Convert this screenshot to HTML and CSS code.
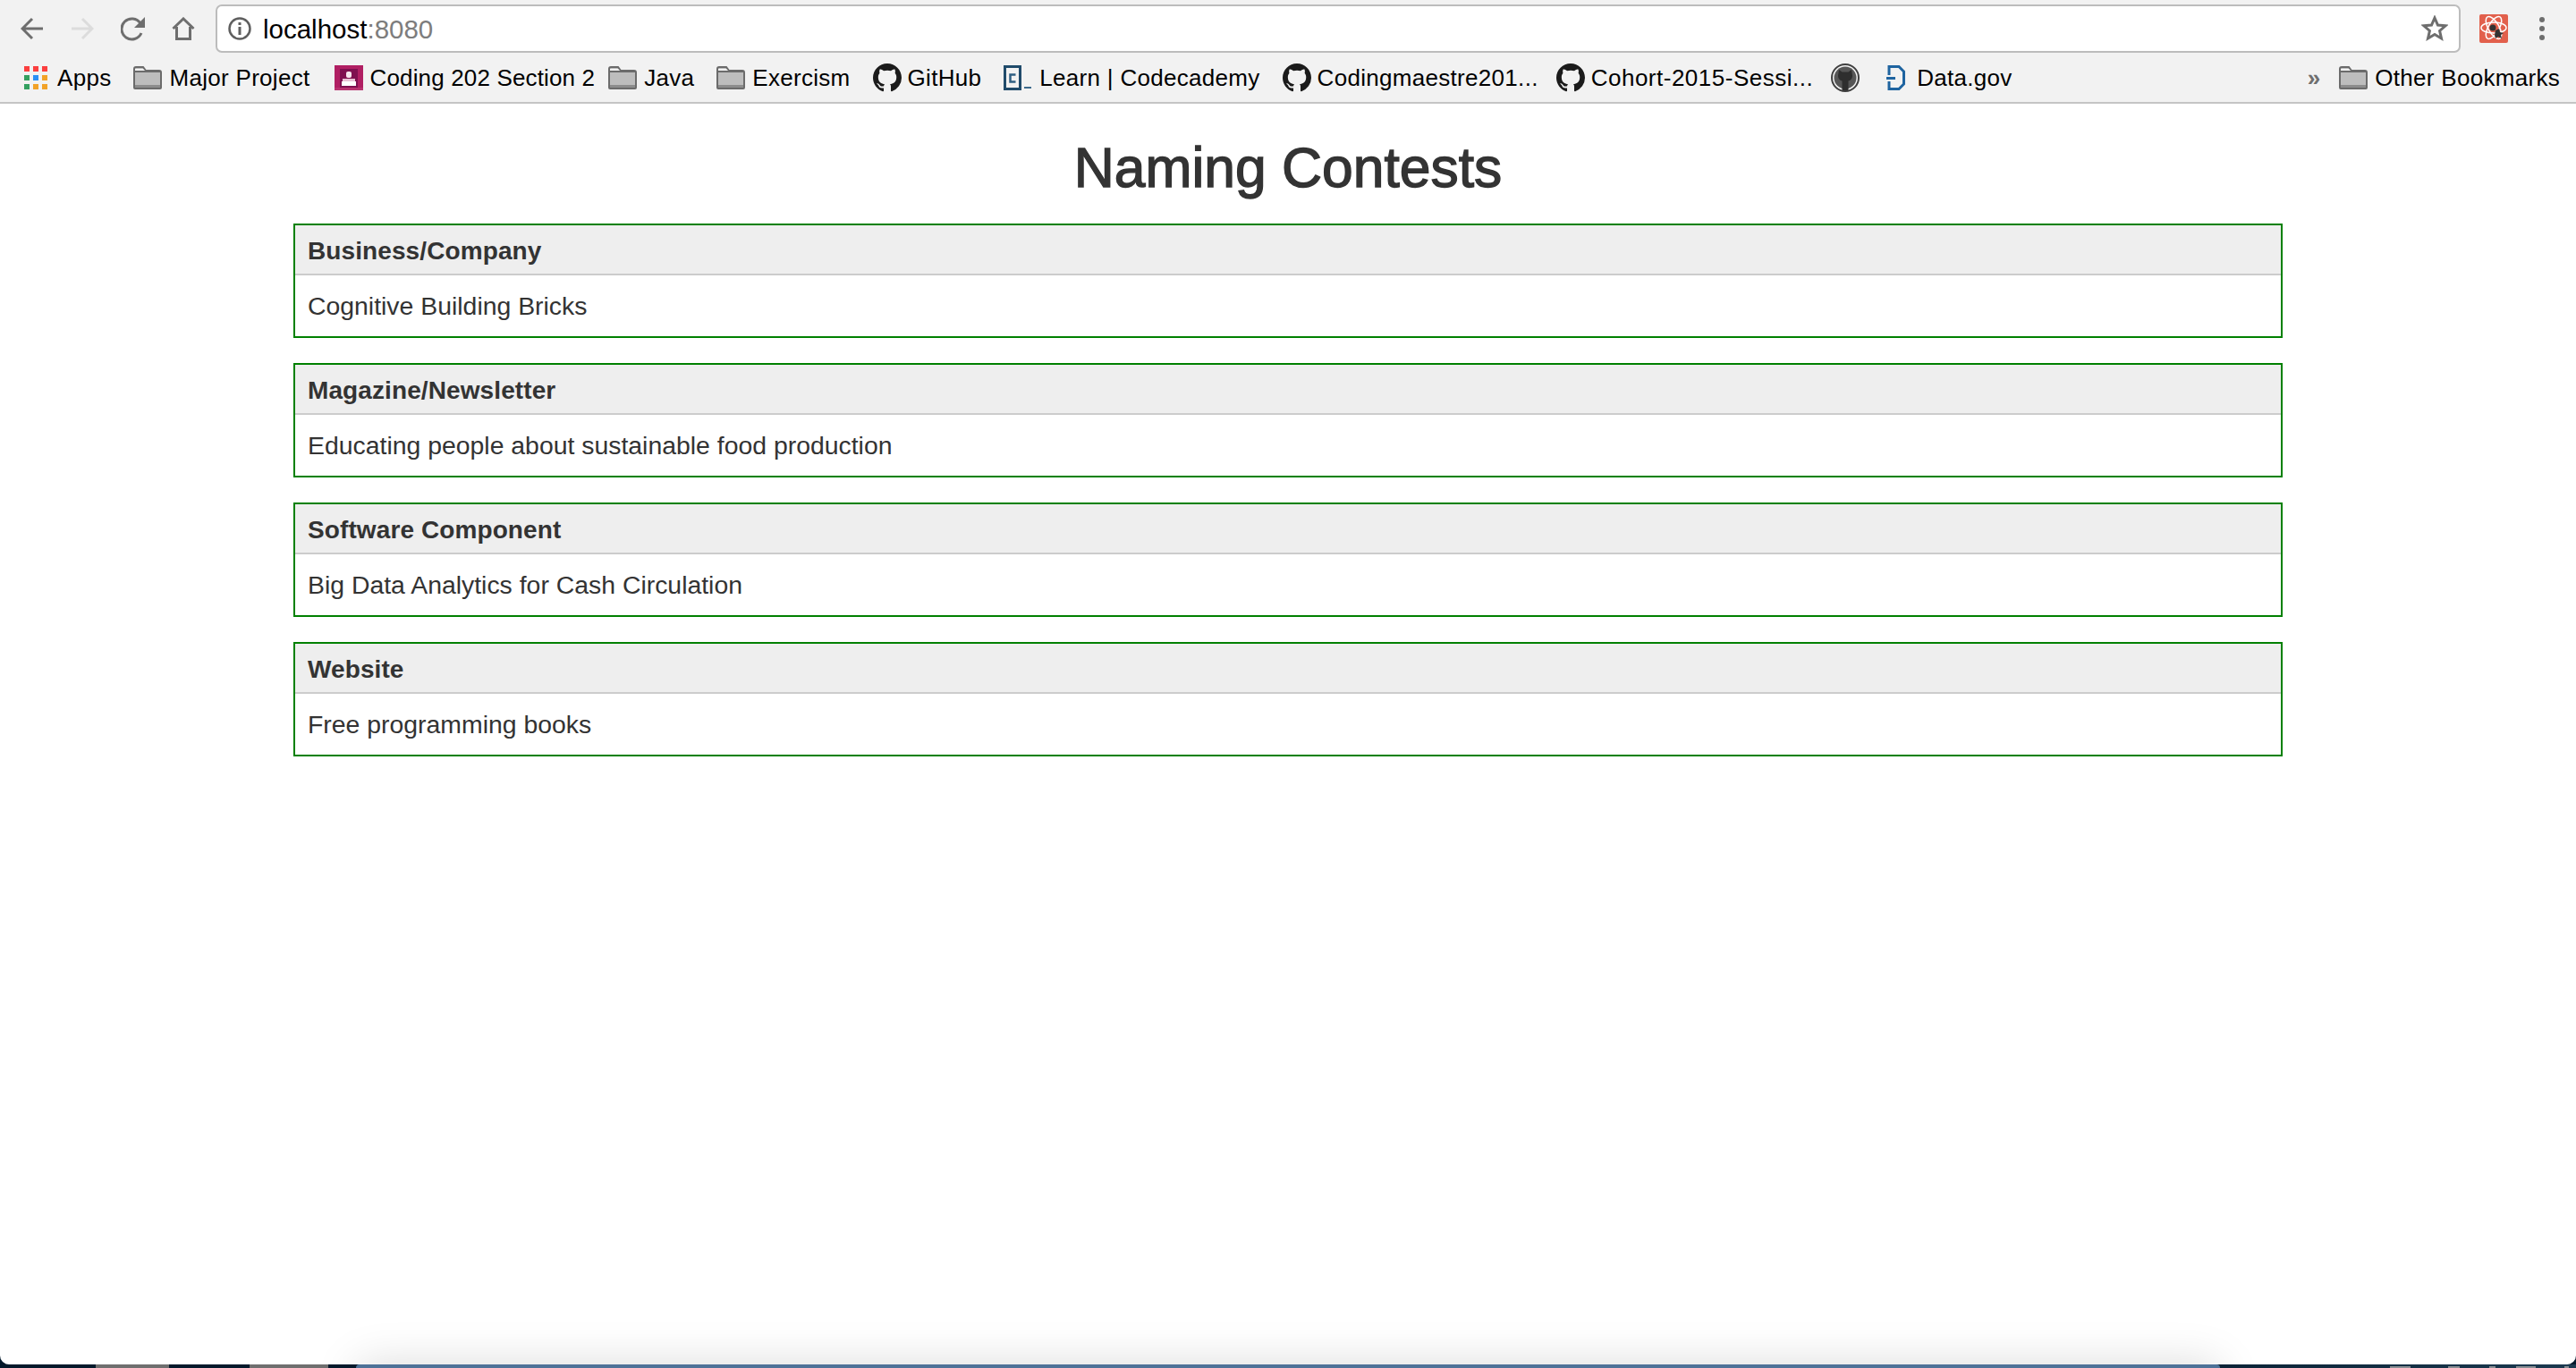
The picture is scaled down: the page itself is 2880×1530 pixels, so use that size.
FILE: index.html
```html
<!DOCTYPE html>
<html lang="en">
<head>
<meta charset="utf-8">
<title>Naming Contests</title>
<link rel="stylesheet" href="styles.css">
</head>
<body>
<svg class="defs" width="0" height="0" aria-hidden="true">
  <symbol id="folder" viewBox="0 0 32 26">
    <path d="M1 24V3a2 2 0 0 1 2-2h8l3 4h15a2 2 0 0 1 2 2v17a1 1 0 0 1-1 1H2a1 1 0 0 1-1-1z" fill="#bdbdbd" stroke="#6b6b6b" stroke-width="2"/>
    <path d="M2 6h12M2 6V3h9l3 3" fill="#f2f2f2" stroke="none"/>
    <path d="M2 6h28" stroke="#6b6b6b" stroke-width="2" fill="none"/>
    <rect x="2" y="21" width="28" height="3" fill="#8c8c8c"/>
  </symbol>
  <symbol id="octo" viewBox="0 0 16 16">
    <path fill="#1b1b1b" d="M8 0C3.58 0 0 3.58 0 8c0 3.54 2.29 6.53 5.47 7.59.4.07.55-.17.55-.38 0-.19-.01-.82-.01-1.49-2.01.37-2.53-.49-2.69-.94-.09-.23-.48-.94-.82-1.13-.28-.15-.68-.52-.01-.53.63-.01 1.08.58 1.23.82.72 1.21 1.87.87 2.33.66.07-.52.28-.87.51-1.07-1.78-.2-3.64-.89-3.64-3.95 0-.87.31-1.59.82-2.15-.08-.2-.36-1.02.08-2.12 0 0 .67-.21 2.2.82.64-.18 1.32-.27 2-.27.68 0 1.36.09 2 .27 1.53-1.04 2.2-.82 2.2-.82.44 1.1.16 1.92.08 2.12.51.56.82 1.27.82 2.15 0 3.07-1.87 3.75-3.65 3.95.29.25.54.73.54 1.48 0 1.07-.01 1.93-.01 2.2 0 .21.15.46.55.38A8.013 8.013 0 0 0 16 8c0-4.42-3.58-8-8-8z"/>
  </symbol>
</svg>

<header class="chrome">
  <div class="toolbar">
    <div class="nav">
      <svg class="navicon" width="26" height="26" viewBox="0 0 26 26"><path d="M25 13H3M13 2 2 13l11 11" fill="none" stroke="#6e6e6e" stroke-width="3"/></svg>
      <svg class="navicon" width="26" height="26" viewBox="0 0 26 26"><path d="M1 13h22M13 2l11 11-11 11" fill="none" stroke="#dcdcdc" stroke-width="3"/></svg>
      <svg class="navicon" width="28" height="28" viewBox="0 0 28 28"><path d="M23 19a11.500 11.500 0 1 1-1-11" fill="none" stroke="#6e6e6e" stroke-width="3"/><path d="M27 1v12H15z" fill="#6e6e6e"/></svg>
      <svg class="navicon" width="26" height="26" viewBox="0 0 26 26"><path d="M1.500 13 13 2l11.500 11M5.500 11v13.500h15V11" fill="none" stroke="#6e6e6e" stroke-width="3"/></svg>
    </div>
    <div class="omnibox">
      <svg class="info" width="28" height="28" viewBox="0 0 28 28"><circle cx="14" cy="14" r="11.500" fill="none" stroke="#5f5f5f" stroke-width="2.500"/><rect x="12.500" y="12" width="3" height="9" fill="#5f5f5f"/><rect x="12.500" y="7" width="3" height="3" fill="#5f5f5f"/></svg>
      <span class="url">localhost<span class="port">:8080</span></span>
      <svg class="star" width="30" height="30" viewBox="0 0 30 30"><path d="m15 3 3.500 8 8.500.8-6.400 5.700 1.900 8.500-7.500-4.500L7.500 26l1.900-8.500L3 11.800l8.500-.8z" fill="none" stroke="#6e6e6e" stroke-width="3"/></svg>
    </div>
    <div class="ext">
      <svg width="32" height="32" viewBox="0 0 32 32"><rect width="32" height="32" rx="2" fill="#e2604c"/><ellipse cx="16" cy="15" rx="14" ry="6" fill="none" stroke="#fff" stroke-width="1.500"/><ellipse cx="16" cy="15" rx="14" ry="6" fill="none" stroke="#fff" stroke-width="1.500" transform="rotate(60 16 15)"/><ellipse cx="16" cy="15" rx="14" ry="6" fill="none" stroke="#fff" stroke-width="1.500" transform="rotate(120 16 15)"/><circle cx="15" cy="15" r="3.500" fill="#333"/><path d="m18 18 4-2 1 4 4 1-3 2 1 4-4-2-3 2-1-4 1-5z" fill="#333"/></svg>
      <span class="kebab"><i></i><i></i><i></i></span>
    </div>
  </div>
  <nav class="bookmarks">
    <a class="bm bm-apps">
      <svg width="26" height="26" viewBox="0 0 26 26"><g fill="#fb3f3f"><rect width="6" height="6"/><rect x="10" width="6" height="6"/><rect x="20" width="6" height="6"/></g><rect y="10" width="6" height="6" fill="#34a060"/><rect x="10" y="10" width="6" height="6" fill="#2c90f5"/><rect x="20" y="10" width="6" height="6" fill="#f2a228"/><rect y="20" width="6" height="6" fill="#34a060"/><rect x="10" y="20" width="6" height="6" fill="#f2a228"/><rect x="20" y="20" width="6" height="6" fill="#f2a228"/></svg>
      Apps</a>
    <a class="bm bm-major"><svg class="fold" width="32" height="26"><use href="#folder"/></svg>Major Project</a>
    <a class="bm bm-coding">
      <svg class="sq" width="32" height="28" viewBox="0 0 32 28"><rect width="32" height="28" fill="#b01f63"/><rect x="6" y="4" width="20" height="24" fill="#7f1050"/><rect x="0" y="25" width="32" height="3" fill="#b8326f"/><rect x="13" y="7" width="6" height="7" rx="2" fill="#f6e6ee"/><rect x="9" y="15" width="14" height="3" fill="#e8c3d5"/><rect x="8" y="18" width="16" height="5" fill="#fff"/></svg>
      Coding 202 Section 2</a>
    <a class="bm"><svg class="fold" width="32" height="26"><use href="#folder"/></svg>Java</a>
    <a class="bm"><svg class="fold" width="32" height="26"><use href="#folder"/></svg>Exercism</a>
    <a class="bm bm-octo"><svg width="32" height="32"><use href="#octo"/></svg>GitHub</a>
    <a class="bm">
      <svg class="cc" width="32" height="28" viewBox="0 0 32 28"><rect x="1.500" y="1.500" width="17" height="25" fill="#f2f2f2" stroke="#204b6b" stroke-width="3"/><path d="M13.500 10.500H7.500v8h6" fill="none" stroke="#2f5f82" stroke-width="2.500"/><rect x="23" y="24" width="8" height="2" fill="#3d6a8c"/></svg>
      Learn | Codecademy</a>
    <a class="bm bm-octo bm-cut"><svg width="32" height="32"><use href="#octo"/></svg>Codingmaestre201...</a>
    <a class="bm bm-octo bm-cut bm-wide"><svg width="32" height="32"><use href="#octo"/></svg>Cohort-2015-Sessi...</a>
    <a class="bm bm-icon">
      <svg width="32" height="32" viewBox="0 0 32 32"><circle cx="16" cy="16" r="15" fill="#f2f2f2" stroke="#3f3f3f" stroke-width="2"/><circle cx="16" cy="16" r="12.500" fill="#565656"/><path d="M9 7l3.500 2.500h7L23 7l1 6.500c0 4-2.500 5.500-4.500 6V30h-7V19.500c-2-.5-4.500-2-4.500-6z" fill="#2e2e2e"/></svg>
    </a>
    <a class="bm bm-gov">
      <svg class="gov" width="26" height="28" viewBox="0 0 26 28"><path d="M4 11V1.500h11l5.500 5.500v14L15 26.500H4V18" fill="none" stroke="#1f64a0" stroke-width="3"/><path d="M1 14.500h10" fill="none" stroke="#1f64a0" stroke-width="3"/></svg>
      Data.gov</a>
    <span class="more">»</span>
    <a class="bm bm-other"><svg class="fold" width="32" height="26"><use href="#folder"/></svg>Other Bookmarks</a>
  </nav>
</header>

<main class="page">
  <h1 class="title">Naming Contests</h1>
  <section class="list">
    <article class="contest">
      <div class="contest-head">Business/Company</div>
      <div class="contest-body">Cognitive Building Bricks</div>
    </article>
    <article class="contest">
      <div class="contest-head">Magazine/Newsletter</div>
      <div class="contest-body">Educating people about sustainable food production</div>
    </article>
    <article class="contest">
      <div class="contest-head">Software Component</div>
      <div class="contest-body">Big Data Analytics for Cash Circulation</div>
    </article>
    <article class="contest">
      <div class="contest-head">Website</div>
      <div class="contest-body">Free programming books</div>
    </article>
  </section>
  <div class="dock-shadow"></div>
</main>
<footer class="desktop">
  <span class="chip chip-a"></span>
  <span class="chip chip-b"></span>
  <span class="dock"></span>
  <span class="bit bit-1"></span>
  <span class="bit bit-2"></span>
  <span class="bit bit-3"></span>
  <span class="bit bit-4"></span>
  <span class="bit bit-5"></span>
</footer>
</body>
</html>
```

FILE: styles.css
```css
* { box-sizing: border-box; }
html, body { height: 100%; }
body {
  margin: 0;
  display: flex;
  flex-direction: column;
  background: #04192b;
  font-family: "Liberation Sans", Arial, sans-serif;
  color: #333;
  overflow: hidden;
}
.defs { position: absolute; }

.chrome {
  height: 116px;
  flex: none;
  background: #f2f2f2;
  border-bottom: 2px solid #c4c4c4;
}
.toolbar {
  height: 64px;
  padding-top: 5px;
  display: flex;
  align-items: flex-start;
}
.nav {
  width: 241px;
  height: 53px;
  padding-left: 23px;
  display: flex;
  align-items: center;
  gap: 30px;
}
.navicon { flex: none; }
.navicon:nth-child(3) { margin-right: -1px; }
.omnibox {
  width: 2510px;
  height: 54px;
  background: #fff;
  border: 2px solid #bcbcbc;
  border-radius: 7px;
  display: flex;
  align-items: center;
  padding: 0 12px 0 11px;
}
.info { margin-right: 12px; flex: none; }
.url { font-size: 29.5px; color: #000; flex: 1; padding-top: 2px; }
.port { color: #7d7d7d; }
.ext {
  flex: 1;
  height: 53px;
  padding-left: 21px;
  display: flex;
  align-items: center;
}
.kebab {
  margin-left: 35px;
  display: flex;
  flex-direction: column;
  gap: 4px;
}
.kebab i {
  display: block;
  width: 6px;
  height: 6px;
  border-radius: 50%;
  background: #6e6e6e;
}

.bookmarks {
  height: 50px;
  padding-left: 27px;
  padding-bottom: 4px;
  display: flex;
  align-items: center;
  font-size: 26px;
  color: #000;
  white-space: nowrap;
}
.bm { display: flex; align-items: center; gap: 8px; margin-right: 25px; letter-spacing: .3px; }
.bm svg { flex: none; }
.bm-apps { gap: 11px; }
.bm-major { margin-right: 27px; }
.bm-coding { letter-spacing: .15px; margin-right: 15px; }
.bm-octo { gap: 7px; }
.bm-cut { margin-right: 20px; }
.bm-wide { letter-spacing: .5px; }
.bm-icon { margin-right: 29px; }
.bm-gov { gap: 9px; }
.bm-other { margin-right: 18px; }
.more {
  margin-left: auto;
  margin-right: 21px;
  color: #6e6e6e;
  font-size: 26px;
  font-weight: 700;
}

.page {
  position: relative;
  flex: 1;
  min-height: 0;
  overflow: hidden;
  background: #fff;
  border-radius: 0 0 10px 10px;
}
.title {
  margin: 0;
  padding-top: 33px;
  height: 134px;
  text-align: center;
  font-size: 62.400px;
  font-weight: 400;
  line-height: 78px;
  color: #333;
  -webkit-text-stroke: 1.400px #333;
}
.list {
  width: 2224px;
  margin-left: 328px;
  display: flex;
  flex-direction: column;
  gap: 28px;
}
.contest {
  height: 128px;
  border: 2px solid #008000;
  font-size: 28px;
  line-height: 40px;
}
.contest-head {
  height: 56px;
  padding: 9px 14px;
  background: #eee;
  border-bottom: 2px solid #ccc;
  font-weight: 700;
  letter-spacing: .1px;
}
.contest-body { padding: 14px 14px 0; font-size: 28.400px; }
.dock-shadow {
  position: absolute;
  left: 400px;
  right: 400px;
  bottom: -60px;
  height: 60px;
  box-shadow: 0 0 50px 0 rgba(0, 0, 0, .15);
}

.desktop {
  height: 4px;
  flex: none;
  display: flex;
  align-items: flex-end;
  background: linear-gradient(to right, #04192b 80%, #1c3a50);
}
.chip { height: 4px; background: #6f6f6f; }
.chip-a { width: 82px; margin-left: 107px; }
.chip-b { width: 88px; margin-left: 90px; }
.dock { height: 4px; width: 2084px; margin-left: 31px; background: #4e7298; border-radius: 6px 6px 0 0; }
.bit { height: 2px; background: #8a8f94; }
.bit-1 { width: 23px; margin-left: 190px; }
.bit-2 { width: 13px; margin-left: 42px; }
.bit-3 { width: 7px; margin-left: 33px; }
.bit-4 { width: 22px; margin-left: 23px; }
.bit-5 { width: 5px; margin-left: 32px; }
```
